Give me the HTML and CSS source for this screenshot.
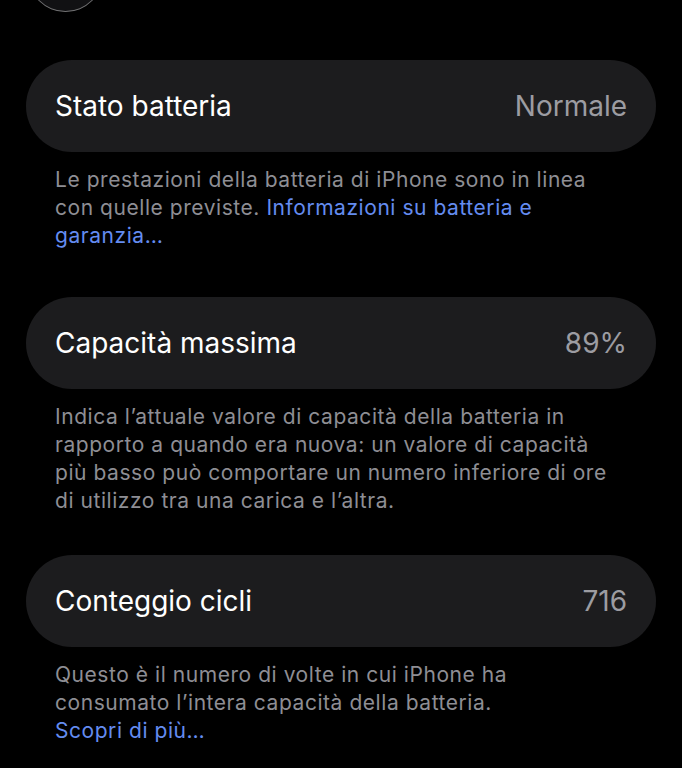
FILE: index.html
```html
<!DOCTYPE html>
<html lang="it">
<head>
<meta charset="utf-8">
<title>Stato batteria</title>
<link rel="stylesheet" href="styles.css">
</head>
<body>
<div class="screen">
  <div class="back-button"></div>

  <section class="group">
    <div class="row">
      <span class="row-label">Stato batteria</span>
      <span class="row-value">Normale</span>
    </div>
    <p class="footnote">Le prestazioni della batteria di iPhone sono in linea<br>con quelle previste. <a class="link" href="#">Informazioni su batteria e<br>garanzia…</a></p>
  </section>

  <section class="group group-wide-gap">
    <div class="row">
      <span class="row-label">Capacità massima</span>
      <span class="row-value">89%</span>
    </div>
    <p class="footnote">Indica l’attuale valore di capacità della batteria in<br>rapporto a quando era nuova: un valore di capacità<br>più basso può comportare un numero inferiore di ore<br>di utilizzo tra una carica e l’altra.</p>
  </section>

  <section class="group">
    <div class="row">
      <span class="row-label">Conteggio cicli</span>
      <span class="row-value">716</span>
    </div>
    <p class="footnote">Questo è il numero di volte in cui iPhone ha<br>consumato l’intera capacità della batteria.<br><a class="link" href="#">Scopri di più…</a></p>
  </section>
</div>
</body>
</html>
```

FILE: styles.css
```css
html, body {
  margin: 0;
  padding: 0;
  background: #000;
}

body {
  font-family: Inter, "Noto Sans", "Liberation Sans", sans-serif;
  color: #fff;
  -webkit-font-smoothing: antialiased;
}

.screen {
  width: 682px;
  height: 768px;
  overflow: hidden;
  display: flex;
  flex-direction: column;
}

/* round glass button cut off by the top edge */
.back-button {
  flex: none;
  width: 75px;
  height: 75px;
  margin: -63px 0 0 28px;
  border-radius: 50%;
  background: #111113;
  box-shadow: inset 0 -1px 0 rgba(255, 255, 255, 0.35), inset 0 0 0 1px rgba(255, 255, 255, 0.1);
}

.group {
  display: flex;
  flex-direction: column;
  margin: 0 26px;
}

.back-button + .group {
  margin-top: 48px;
}

.group + .group {
  margin-top: 40px;
}

.group + .group-wide-gap {
  margin-top: 47px;
}

.row {
  height: 92px;
  border-radius: 46px;
  background: #1c1c1e;
  display: flex;
  align-items: center;
  justify-content: space-between;
  padding: 0 29px;
}

.row-label {
  font-size: 28px;
  color: #fff;
}

.row-value {
  font-size: 28px;
  color: #9c9ca2;
}

.footnote {
  margin: 14px 0 0;
  padding: 0 20px 0 29px;
  font-size: 21px;
  line-height: 28px;
  letter-spacing: 0.55px;
  white-space: nowrap;
  color: #8e8e94;
}

.link {
  color: #648cf0;
  text-decoration: none;
}
```
